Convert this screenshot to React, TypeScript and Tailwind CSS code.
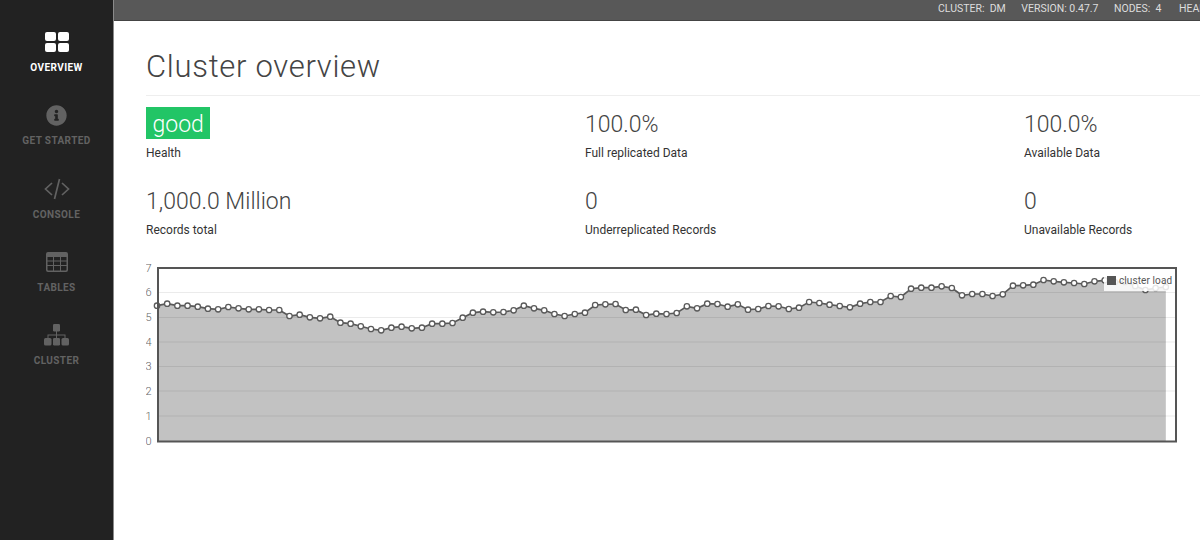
import { FaInfoCircle } from "react-icons/fa";

const FONT = "font-['Roboto','Liberation_Sans',sans-serif]";

// y pixel of every sample of the load series, read off the chart
const LOAD = [
  305.7, 303.7, 305.7, 305.7, 306.7, 308.7, 309.3, 307, 308.3, 309.3, 309.3, 310, 310, 316, 314.7, 317.3, 318.3,
  316.7, 322.7, 323.7, 326.3, 329, 330.3, 327.7, 326.7, 328.3, 327.7, 323.7, 323.7, 323, 317.7, 312.7, 311.7, 312.3,
  312, 310.3, 305.7, 308.3, 310.3, 314, 316, 314, 312.7, 305, 304.3, 304, 310, 309.7, 315, 313.7, 314, 313, 306.3,
  308.3, 303.7, 304, 306.7, 304.3, 309.7, 309, 306, 306.3, 309, 307.7, 302, 303, 304.7, 306, 307.3, 303.7, 302, 302,
  296, 297, 288.7, 287.7, 287.7, 286.3, 288, 295.3, 294, 294, 296, 294.3, 285.7, 285.3, 284.7, 280, 281.3, 282.3, 283,
  284, 281.3, 280.3, 282, 282, 286, 290, 288, 287,
];

const POINTS = LOAD.map((y, i) => [157 + i * 10.19, y]);
const LINE = POINTS.map(([x, y]) => `${x},${y}`).join(" ");
const GRID_Y = [292.5, 317.5, 342, 366.5, 391, 416];
const TICKS = [
  { label: "7", y: 268 },
  { label: "6", y: 292.5 },
  { label: "5", y: 317.5 },
  { label: "4", y: 342 },
  { label: "3", y: 366.5 },
  { label: "2", y: 391 },
  { label: "1", y: 416 },
  { label: "0", y: 441 },
];

const STATS = [
  { value: "good", label: "Health", badge: true },
  { value: "100.0%", label: "Full replicated Data" },
  { value: "100.0%", label: "Available Data" },
  { value: "1,000.0 Million", label: "Records total" },
  { value: "0", label: "Underreplicated Records" },
  { value: "0", label: "Unavailable Records" },
];

function OverviewIcon() {
  return (
    <svg width="24" height="20" viewBox="0 0 24 20" fill="currentColor">
      <rect x="0" y="0" width="11" height="9" rx="2" />
      <rect x="13" y="0" width="11" height="9" rx="2" />
      <rect x="0" y="11" width="11" height="9" rx="2" />
      <rect x="13" y="11" width="11" height="9" rx="2" />
    </svg>
  );
}

function CodeIcon() {
  return (
    <svg width="26" height="22" viewBox="0 0 26 22" fill="none" stroke="currentColor" strokeWidth="1.7">
      <path d="M8 5 L1.5 11 L8 17" />
      <path d="M18 5 L24.5 11 L18 17" />
      <path d="M15.5 1 L10.5 21" />
    </svg>
  );
}

function TableIcon() {
  return (
    <svg width="22" height="20" viewBox="0 0 22 20" fill="currentColor">
      <path
        fillRule="evenodd"
        d="M2 0 H20 A2 2 0 0 1 22 2 V18 A2 2 0 0 1 20 20 H2 A2 2 0 0 1 0 18 V2 A2 2 0 0 1 2 0 Z M1.5 5 V8.5 H7 V5 Z M8 5 V8.5 H14 V5 Z M15 5 V8.5 H20.5 V5 Z M1.5 9.5 V13 H7 V9.5 Z M8 9.5 V13 H14 V9.5 Z M15 9.5 V13 H20.5 V9.5 Z M1.5 14 V17.5 a1 1 0 0 0 1 1 H7 V14 Z M8 14 V18.5 H14 V14 Z M15 14 V18.5 H19.5 a1 1 0 0 0 1 -1 V14 Z"
      />
    </svg>
  );
}

function ClusterIcon() {
  return (
    <svg width="25" height="22" viewBox="0 0 25 22" fill="currentColor">
      <rect x="9" y="0" width="7" height="7.5" rx="1.2" />
      <rect x="0" y="14" width="7.5" height="7.5" rx="1.5" />
      <rect x="9" y="14" width="7" height="7.5" rx="1.2" />
      <rect x="17.5" y="14" width="7.5" height="7.5" rx="1.5" />
      <path d="M12 7 H13 V10.5 H21.5 V14 H20.5 V11.5 H13 V14 H12 V11.5 H4.5 V14 H3.5 V10.5 H12 Z" />
    </svg>
  );
}

const NAV_ITEMS = [
  { label: "OVERVIEW", icon: <OverviewIcon />, active: true },
  { label: "GET STARTED", icon: <FaInfoCircle size={21} /> },
  { label: "CONSOLE", icon: <CodeIcon /> },
  { label: "TABLES", icon: <TableIcon /> },
  { label: "CLUSTER", icon: <ClusterIcon /> },
];

function Sidebar() {
  return (
    <aside className="flex h-full w-[114px] shrink-0 flex-col border-r border-[#8a8a8a] bg-[#222222] pt-[27px]">
      {NAV_ITEMS.map((item) => (
        <div
          key={item.label}
          className={
            item.active
              ? "flex h-[73.3px] flex-col items-center text-white"
              : "flex h-[73.3px] flex-col items-center text-[#626262]"
          }
        >
          <div className="flex h-[30px] items-center justify-center">{item.icon}</div>
          <span className="mt-[4px] text-[10px] leading-[14px] font-bold tracking-[0.4px]">{item.label}</span>
        </div>
      ))}
    </aside>
  );
}

function TopBar() {
  return (
    <div className="flex h-[21px] shrink-0 gap-[15.5px] overflow-hidden border-b border-[#444444] bg-[#585858] pl-[824px] text-[10.5px] leading-[17px] whitespace-nowrap text-[#dddddd]">
      <span>CLUSTER:&nbsp; DM</span>
      <span>VERSION: 0.47.7</span>
      <span>NODES:&nbsp; 4</span>
      <span className="ml-[2px]">HEALTH: GOOD</span>
    </div>
  );
}

function LoadChart() {
  return (
    <div className="relative mt-[-1px] h-[190px] w-[1034px]">
      <svg width="1034" height="190" viewBox="146 260 1034 190">
        <polygon points={`157,441 ${LINE} ${POINTS[99][0]},441`} fill="#c2c2c2" />
        {GRID_Y.map((y) => (
          <line key={y} x1="158" x2="1175" y1={y} y2={y} stroke="#000000" strokeOpacity="0.08" />
        ))}
        <polyline points={LINE} fill="none" stroke="#5a5a5a" strokeWidth="1.7" />
        {POINTS.map(([x, y]) => (
          <circle key={x} cx={x} cy={y} r="2.7" fill="#ffffff" stroke="#5a5a5a" strokeWidth="1.3" />
        ))}
        <rect x="158" y="268" width="1018" height="173.5" fill="none" stroke="#555555" strokeWidth="2" />
        {TICKS.map((tick) => (
          <text key={tick.label} x="151.5" y={tick.y + 3.5} textAnchor="end" fontSize="11" fontWeight="300" fill="#666666">
            {tick.label}
          </text>
        ))}
      </svg>
      <div className="absolute top-[15px] left-[958px] flex h-[16px] w-[68px] items-start gap-[3px] bg-white/85 pt-[1px] pl-[3px] text-[10px] leading-[10px] text-[#555555]">
        <div className="h-[9px] w-[9px] shrink-0 bg-[#555555]" />
        <span className="tracking-[0.1px] whitespace-nowrap">cluster load</span>
      </div>
    </div>
  );
}

export default function App() {
  return (
    <div className={`flex h-[540px] w-[1200px] overflow-hidden bg-white ${FONT}`}>
      <Sidebar />
      <main className="flex min-w-0 flex-1 flex-col">
        <TopBar />
        <div className="pl-[32px]">
          <div className="h-[75px] border-b border-[#eeeeee] pt-[26px]">
            <h1 className="text-[31px] leading-[40px] font-light tracking-[0.7px] text-[#444444]">Cluster overview</h1>
          </div>
          <div className="grid w-[1317px] grid-cols-3 pt-[11px]">
            {STATS.map((stat) => (
              <div key={stat.label} className="h-[77px]">
                <div
                  className={
                    stat.badge
                      ? "h-[32px] w-fit bg-[#22c566] px-[6.5px] text-[23px] leading-[35px] font-light text-white"
                      : "h-[32px] text-[23px] leading-[35px] font-light text-[#444444]"
                  }
                >
                  {stat.value}
                </div>
                <div className="mt-[6px] text-[12px] leading-[16px] text-[#333333]">{stat.label}</div>
              </div>
            ))}
          </div>
          <LoadChart />
        </div>
      </main>
    </div>
  );
}
